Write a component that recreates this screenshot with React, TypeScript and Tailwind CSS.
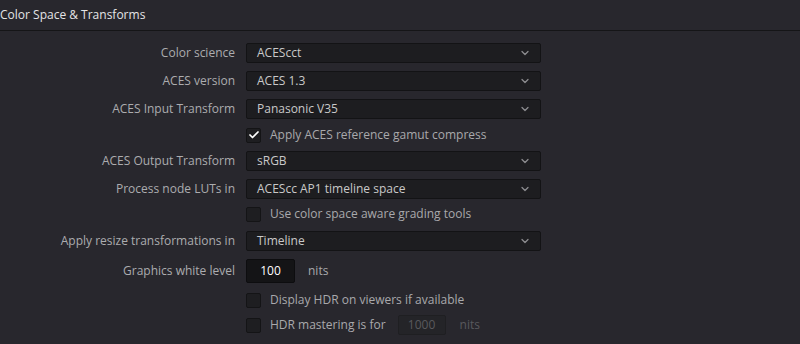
import { Check, ChevronDown } from 'lucide-react'

type Row =
  | { kind: 'select'; label: string; value: string; h: string }
  | { kind: 'check'; label: string; checked?: boolean; h: string; extra?: boolean }
  | { kind: 'number'; label: string; value: string; h: string }

const ROWS: Row[] = [
  { kind: 'select', label: 'Color science', value: 'ACEScct', h: 'h-[28px]' },
  { kind: 'select', label: 'ACES version', value: 'ACES 1.3', h: 'h-[28px]' },
  { kind: 'select', label: 'ACES Input Transform', value: 'Panasonic V35', h: 'h-[28px]' },
  { kind: 'check', label: 'Apply ACES reference gamut compress', checked: true, h: 'h-[24px]' },
  { kind: 'select', label: 'ACES Output Transform', value: 'sRGB', h: 'h-[28px]' },
  { kind: 'select', label: 'Process node LUTs in', value: 'ACEScc AP1 timeline space', h: 'h-[27px]' },
  { kind: 'check', label: 'Use color space aware grading tools', h: 'h-[24px]' },
  { kind: 'select', label: 'Apply resize transformations in', value: 'Timeline', h: 'h-[30px]' },
  { kind: 'number', label: 'Graphics white level', value: '100', h: 'h-[29px]' },
  { kind: 'check', label: 'Display HDR on viewers if available', h: 'h-[30px]' },
  { kind: 'check', label: 'HDR mastering is for', h: 'h-[20px]', extra: true },
]

function Checkbox({ checked }: { checked?: boolean }) {
  return (
    <span className="flex h-[15px] w-[15px] shrink-0 items-center justify-center rounded-[2px] border border-[#141416] bg-[#1e1e21]">
      {checked && <Check className="h-3 w-3 text-white" strokeWidth={3.5} />}
    </span>
  )
}

function Control({ row }: { row: Row }) {
  if (row.kind === 'select') {
    return (
      <div className="flex h-[20px] w-[295px] items-center justify-between rounded-[2px] border border-[#131315] bg-[#1d1d20] pl-[10px] pr-[9px] text-[#c9c9c9]">
        <span>{row.value}</span>
        <ChevronDown className="h-[12px] w-[12px] text-[#8d8d90]" strokeWidth={2.5} />
      </div>
    )
  }
  if (row.kind === 'number') {
    return (
      <div className="flex items-center">
        <div className="flex h-[24px] w-[49px] items-center justify-center rounded-[2px] border border-[#0d0d0f] bg-[#141416] text-white">
          {row.value}
        </div>
        <span className="ml-[13px] text-[#a9a9ac]">nits</span>
      </div>
    )
  }
  return (
    <div className="flex items-center">
      <Checkbox checked={row.checked} />
      <span className="ml-[9px] text-[#a9a9ac]">{row.label}</span>
      {row.extra && (
        <>
          <div className="ml-[12px] flex h-[20px] w-[48px] items-center justify-center rounded-[2px] border border-[#1f1f22] bg-[#242428] text-[#59595d]">
            1000
          </div>
          <span className="ml-[14px] text-[#59595d]">nits</span>
        </>
      )}
    </div>
  )
}

export default function App() {
  return (
    <div
      className="h-[344px] w-[800px] overflow-hidden bg-[#28272d] text-[12px]"
      style={{ fontFamily: '"Open Sans", "Noto Sans", sans-serif' }}
    >
      <div className="flex h-[31px] items-center border-b border-[#151517] text-[12px] text-[#e4e4e6]">
        Color Space &amp; Transforms
      </div>
      <div className="flex flex-col pt-[8px]">
        {ROWS.map((row) => (
          <div key={row.label} className={`flex items-center ${row.h}`}>
            <div className="w-[235px] shrink-0 text-right text-[#acacaf]">
              {row.kind === 'check' ? '' : row.label}
            </div>
            <div className="ml-[11px]">
              <Control row={row} />
            </div>
          </div>
        ))}
      </div>
    </div>
  )
}
